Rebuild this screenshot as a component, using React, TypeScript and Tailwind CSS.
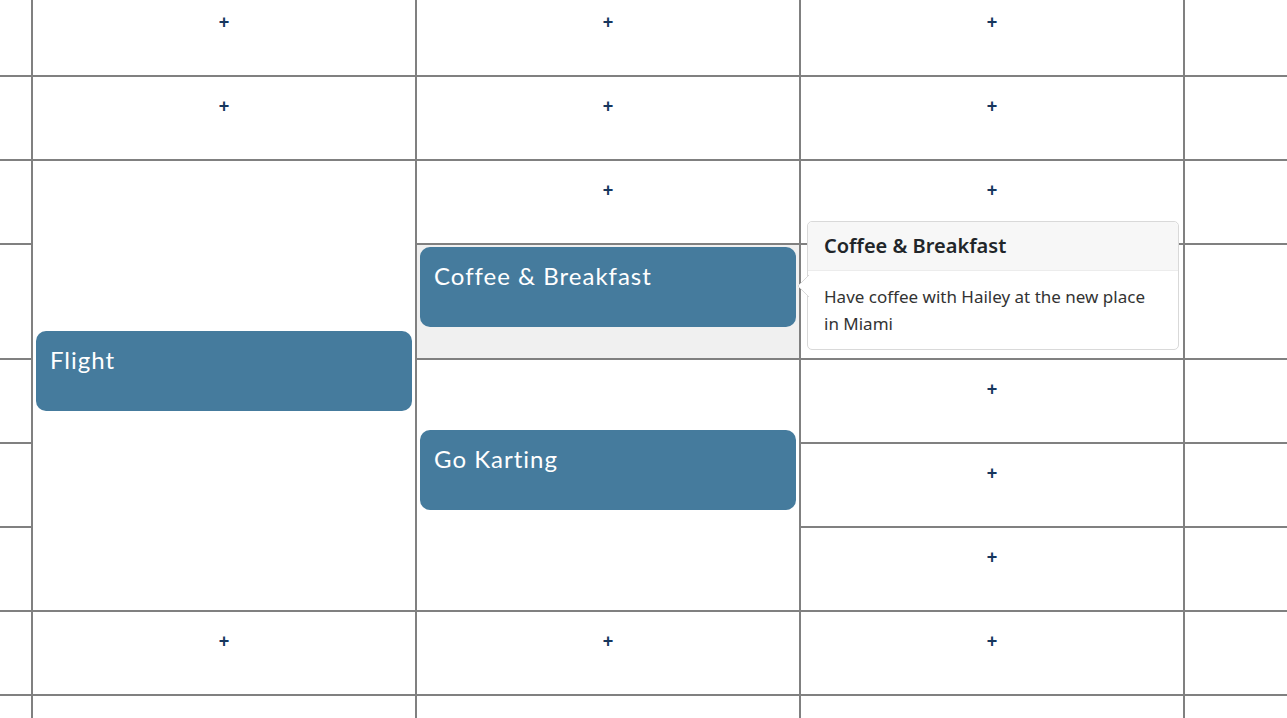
import React from 'react';

const eventFont = { fontFamily: 'Lato, "Open Sans", sans-serif' };

function Plus() {
  return (
    <div className="flex justify-center pt-[19px] text-[18px] font-bold leading-[20px] text-[#17375e]" style={{ fontFamily: '"Liberation Sans", sans-serif' }}>
      +
    </div>
  );
}

function EventCard({ title }: { title: string }) {
  return (
    <div className="h-[80px] rounded-[10px] bg-[#457b9d] px-[14px] pt-[14px] text-[24px] leading-[30px] tracking-[1px] text-white" style={eventFont}>
      {title}
    </div>
  );
}

function Tooltip() {
  return (
    <div
      className="absolute left-[6px] top-[-24px] z-10 w-[372px] rounded-[5px] border border-[#d9d9d9] bg-white"
      style={{ fontFamily: '"Noto Sans", "Open Sans", sans-serif' }}
    >
      {/* arrow */}
      <svg className="absolute left-[-11px] top-[52px]" width="12" height="24" viewBox="0 0 12 24">
        <path d="M12 1 L1 12 L12 23" fill="#fff" stroke="#d9d9d9" strokeWidth="1" />
      </svg>
      <div className="rounded-t-[5px] border-b border-[#ececec] bg-[#f7f7f7] px-[16px] py-[12px] text-[20px] font-semibold leading-[24px] text-[#212529]">
        Coffee &amp; Breakfast
      </div>
      <div className="px-[16px] py-[12px] text-[17px] leading-[27px] text-[#333]">
        Have coffee with Hailey at the new place in Miami
      </div>
    </div>
  );
}

export default function App() {
  return (
    <div className="h-[718px] overflow-hidden bg-white">
      <div className="-mt-[7px] grid grid-cols-[31px_382px_382px_382px_1fr] grid-rows-[82px_82px_82px_113px_82px_82px_82px_82px_82px] gap-[2px] bg-[#808080]">
        {/* left gutter */}
        <div className="col-start-1 row-start-1 bg-white" />
        <div className="col-start-1 row-start-2 bg-white" />
        <div className="col-start-1 row-start-3 bg-white" />
        <div className="col-start-1 row-start-4 bg-white" />
        <div className="col-start-1 row-start-5 bg-white" />
        <div className="col-start-1 row-start-6 bg-white" />
        <div className="col-start-1 row-start-7 bg-white" />
        <div className="col-start-1 row-start-8 bg-white" />
        <div className="col-start-1 row-start-9 bg-white" />

        {/* day 1 */}
        <div className="col-start-2 row-start-1 bg-white"><Plus /></div>
        <div className="col-start-2 row-start-2 bg-white"><Plus /></div>
        <div className="col-start-2 row-start-3 row-span-5 bg-white pl-[3px] pr-[3px] pt-[170px]">
          <EventCard title="Flight" />
        </div>
        <div className="col-start-2 row-start-8 bg-white"><Plus /></div>
        <div className="col-start-2 row-start-9 bg-white" />

        {/* day 2 */}
        <div className="col-start-3 row-start-1 bg-white"><Plus /></div>
        <div className="col-start-3 row-start-2 bg-white"><Plus /></div>
        <div className="col-start-3 row-start-3 bg-white"><Plus /></div>
        <div className="col-start-3 row-start-4 bg-[#f0f0f0] pl-[3px] pr-[3px] pt-[2px]">
          <EventCard title="Coffee & Breakfast" />
        </div>
        <div className="col-start-3 row-start-5 row-span-3 bg-white pl-[3px] pr-[3px] pt-[70px]">
          <EventCard title="Go Karting" />
        </div>
        <div className="col-start-3 row-start-8 bg-white"><Plus /></div>
        <div className="col-start-3 row-start-9 bg-white" />

        {/* day 3 */}
        <div className="col-start-4 row-start-1 bg-white"><Plus /></div>
        <div className="col-start-4 row-start-2 bg-white"><Plus /></div>
        <div className="col-start-4 row-start-3 bg-white"><Plus /></div>
        <div className="relative col-start-4 row-start-4 bg-white">
          <Tooltip />
        </div>
        <div className="col-start-4 row-start-5 bg-white"><Plus /></div>
        <div className="col-start-4 row-start-6 bg-white"><Plus /></div>
        <div className="col-start-4 row-start-7 bg-white"><Plus /></div>
        <div className="col-start-4 row-start-8 bg-white"><Plus /></div>
        <div className="col-start-4 row-start-9 bg-white" />

        {/* right gutter */}
        <div className="col-start-5 row-start-1 bg-white" />
        <div className="col-start-5 row-start-2 bg-white" />
        <div className="col-start-5 row-start-3 bg-white" />
        <div className="col-start-5 row-start-4 bg-white" />
        <div className="col-start-5 row-start-5 bg-white" />
        <div className="col-start-5 row-start-6 bg-white" />
        <div className="col-start-5 row-start-7 bg-white" />
        <div className="col-start-5 row-start-8 bg-white" />
        <div className="col-start-5 row-start-9 bg-white" />
      </div>
    </div>
  );
}
